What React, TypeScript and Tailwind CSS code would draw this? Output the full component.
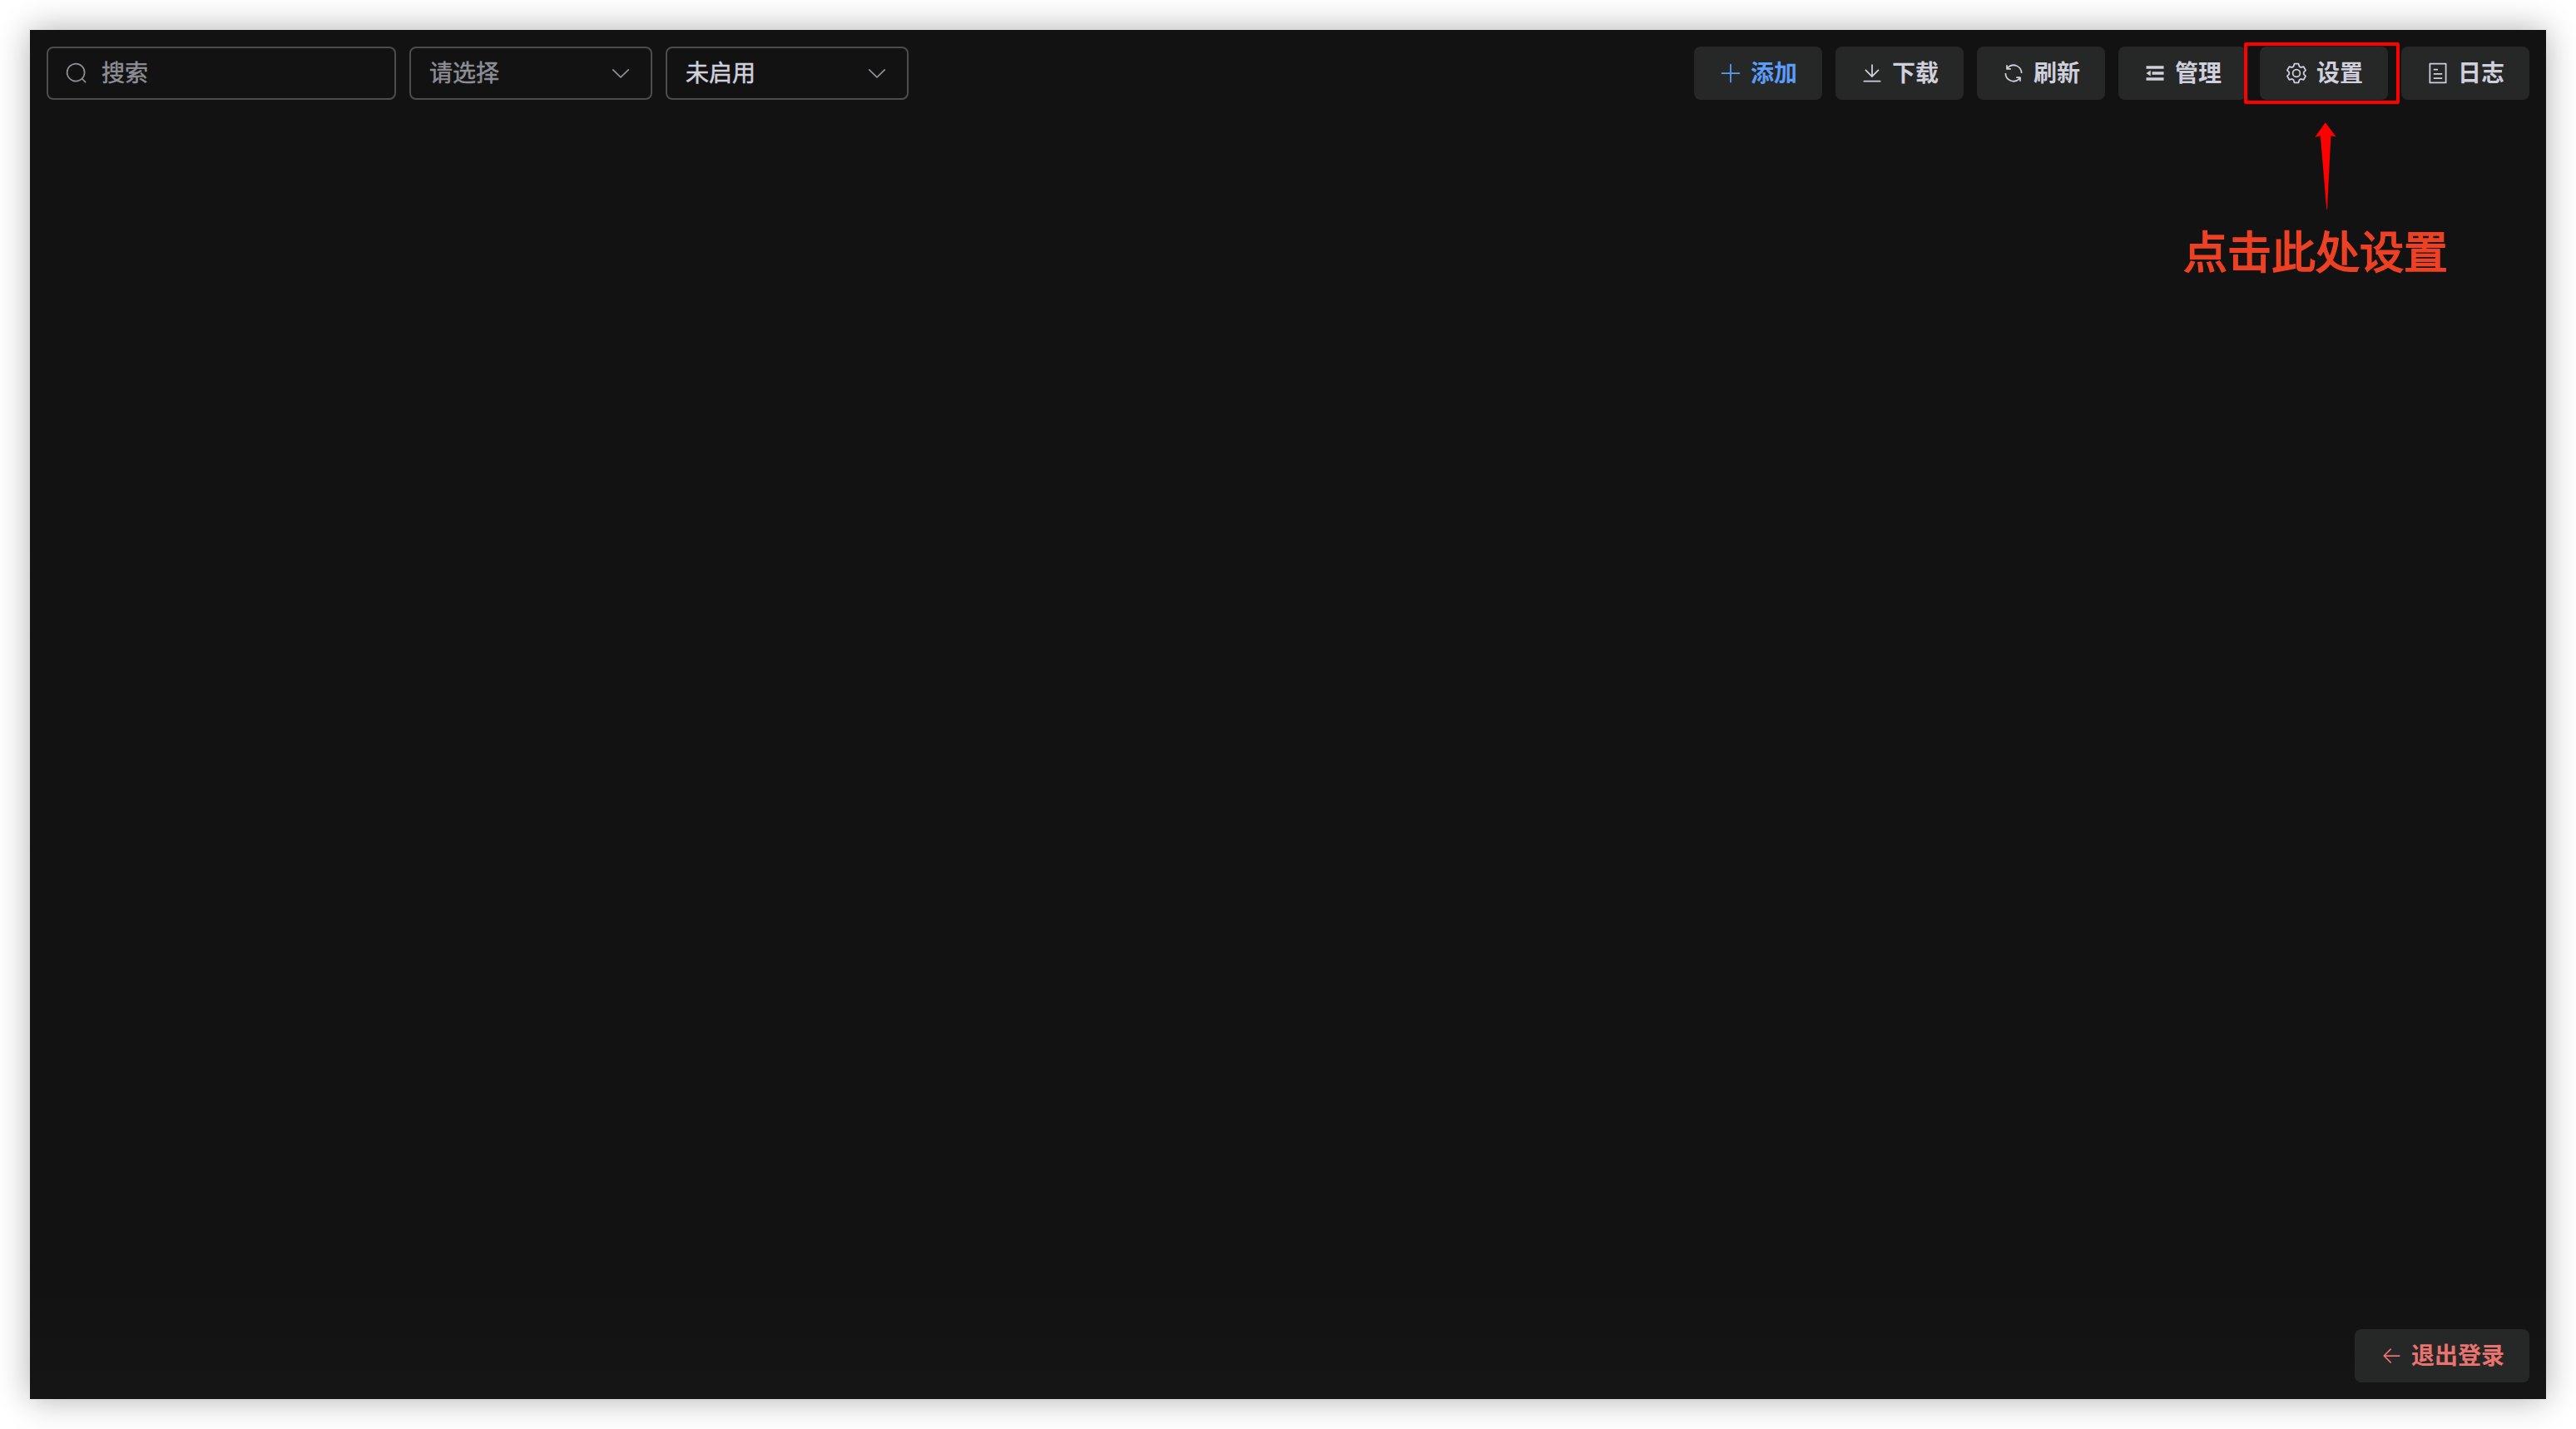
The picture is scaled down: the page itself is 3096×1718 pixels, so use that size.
import { useState } from 'react';

// Icon shapes, all on a 1024 grid
const icons = {
  search:
    'm795.904 750.72 124.992 124.928a32 32 0 0 1-45.248 45.248L750.656 795.904a416 416 0 1 1 45.248-45.248zM480 832a352 352 0 1 0 0-704 352 352 0 0 0 0 704',
  arrowDown:
    'M831.872 340.864 512 652.672 192.128 340.864a30.592 30.592 0 0 0-42.752 0 29.12 29.12 0 0 0 0 41.6L489.664 714.24a32 32 0 0 0 44.672 0l340.288-331.712a29.12 29.12 0 0 0 0-41.728 30.592 30.592 0 0 0-42.752 0z',
  plus: 'M480 480V128a32 32 0 0 1 64 0v352h352a32 32 0 1 1 0 64H544v352a32 32 0 1 1-64 0V544H128a32 32 0 0 1 0-64z',
  download:
    'M160 832h704a32 32 0 1 1 0 64H160a32 32 0 1 1 0-64m384-253.696 236.288-236.352 45.248 45.248L508.8 704 192 387.2l45.248-45.248L480 584.704V128h64z',
  refresh:
    'M771.776 794.88A384 384 0 0 1 128 512h64a320 320 0 0 0 555.712 216.448H654.72a32 32 0 1 1 0-64h149.056a32 32 0 0 1 32 32v148.928a32 32 0 1 1-64 0v-50.56zM276.288 295.616h92.992a32 32 0 0 1 0 64H220.16a32 32 0 0 1-32-32V178.56a32 32 0 0 1 64 0v50.56A384 384 0 0 1 896.128 512h-64a320 320 0 0 0-555.776-216.384z',
  fold: 'M896 192H128v128h768zm0 256H384v128h512zm0 256H128v128h768zM320 384 128 512l192 128z',
  setting:
    'M600.704 64a32 32 0 0 1 30.464 22.208l35.2 109.376c14.784 7.232 28.928 15.36 42.432 24.512l112.384-24.192a32 32 0 0 1 34.432 15.36L944.32 364.8a32 32 0 0 1-4.032 37.504l-77.12 85.12a357.12 357.12 0 0 1 0 49.024l77.12 85.248a32 32 0 0 1 4.032 37.504l-88.704 153.6a32 32 0 0 1-34.432 15.296L708.8 803.904c-13.44 9.088-27.648 17.28-42.368 24.512l-35.264 109.376A32 32 0 0 1 600.704 960H423.296a32 32 0 0 1-30.464-22.208L357.696 828.48a351.616 351.616 0 0 1-42.56-24.64l-112.32 24.256a32 32 0 0 1-34.432-15.36L79.68 659.2a32 32 0 0 1 4.032-37.504l77.12-85.248a357.12 357.12 0 0 1 0-48.896l-77.12-85.248A32 32 0 0 1 79.68 364.8l88.704-153.6a32 32 0 0 1 34.432-15.296l112.32 24.256c13.568-9.152 27.776-17.408 42.56-24.64l35.2-109.312A32 32 0 0 1 423.232 64H600.64zm-23.424 64H446.72l-36.352 113.088-24.512 11.968a294.113 294.113 0 0 0-34.816 20.096l-22.656 15.36-116.224-25.088-65.28 113.152 79.68 88.192-1.92 27.136a293.12 293.12 0 0 0 0 40.192l1.92 27.136-79.808 88.192 65.344 113.152 116.224-25.024 22.656 15.296a294.113 294.113 0 0 0 34.816 20.096l24.512 11.968L446.72 896h130.688l36.48-113.152 24.448-11.904a288.282 288.282 0 0 0 34.752-20.096l22.592-15.296 116.288 25.024 65.28-113.152-79.744-88.192 1.92-27.136a293.12 293.12 0 0 0 0-40.256l-1.92-27.136 79.808-88.128-65.344-113.152-116.288 24.96-22.592-15.232a287.616 287.616 0 0 0-34.752-20.096l-24.448-11.904L577.344 128zM512 320a192 192 0 1 1 0 384 192 192 0 0 1 0-384m0 64a128 128 0 1 0 0 256 128 128 0 0 0 0-256',
  tickets:
    'M192 128v768h640V128zm-32-64h704a32 32 0 0 1 32 32v832a32 32 0 0 1-32 32H160a32 32 0 0 1-32-32V96a32 32 0 0 1 32-32m160 448h384v64H320zm0-192h192v64H320zm0 384h384v64H320z',
  back: 'M224 480h640a32 32 0 1 1 0 64H224a32 32 0 0 1 0-64m13.248 32 265.408 265.344a32 32 0 0 1-45.312 45.312l-288-288a32 32 0 0 1 0-45.312l288-288a32 32 0 1 1 45.312 45.312z',
};

type IconName = keyof typeof icons;

function Icon({ name }: { name: IconName }) {
  return (
    <svg className="size-7 shrink-0" viewBox="0 0 1024 1024" fill="currentColor">
      <path d={icons[name]} />
    </svg>
  );
}

interface ActionButtonProps {
  icon: IconName;
  label: string;
  color?: string;
}

function ActionButton({ icon, label, color = 'text-[#cfd0dc]' }: ActionButtonProps) {
  return (
    <button
      className={`flex h-16 items-center gap-2.5 rounded-lg bg-[#262727] px-[30px] text-[28px] leading-none font-bold whitespace-nowrap ${color}`}
    >
      <Icon name={icon} />
      <span className="pb-[5px]">{label}</span>
    </button>
  );
}

function SelectBox({ label, color }: { label: string; color: string }) {
  return (
    <button className="flex h-16 w-[292px] items-center justify-between rounded-lg border-2 border-[#4c4d4f] px-[22px] text-[28px] leading-none [-webkit-text-stroke:0.5px]">
      <span className={`pb-[5px] ${color}`}>{label}</span>
      <span className="text-[#8d9095]">
        <Icon name="arrowDown" />
      </span>
    </button>
  );
}

export default function App() {
  const [keyword, setKeyword] = useState('');

  return (
    <div className="h-[1718px] w-[3096px] overflow-hidden bg-white p-9 font-['Noto_Sans_CJK_SC',sans-serif]">
      <div className="flex h-[1646px] flex-col justify-between bg-linear-to-b from-[#121212] from-92% to-[#151515] p-5 shadow-[0_0_38px_rgba(0,0,0,0.32)]">
        {/* Toolbar */}
        <div className="flex justify-between">
          <div className="flex gap-4">
            <label className="flex h-16 w-[420px] items-center gap-4 rounded-lg border-2 border-[#4c4d4f] px-5 text-[#8d8e95]">
              <Icon name="search" />
              <input
                className="min-w-0 flex-1 bg-transparent pb-[5px] text-[28px] outline-none [-webkit-text-stroke:0.5px] placeholder:text-[#8d8e95]"
                value={keyword}
                onChange={(e) => setKeyword(e.target.value)}
                placeholder="搜索"
              />
            </label>
            <SelectBox label="请选择" color="text-[#8d8e95]" />
            <SelectBox label="未启用" color="text-[#cfd0dc]" />
          </div>

          <div className="flex gap-4">
            <ActionButton icon="plus" label="添加" color="text-[#5a9cf8]" />
            <ActionButton icon="download" label="下载" />
            <ActionButton icon="refresh" label="刷新" />
            <ActionButton icon="fold" label="管理" />
            {/* Settings button with its callout */}
            <div className="relative">
              <ActionButton icon="setting" label="设置" />
              <div className="pointer-events-none absolute -top-[5px] -left-[19px] h-[74px] w-[187px] rounded-xs border-4 border-[#ff0000]" />
              <svg className="absolute top-[91px] left-[66px] h-[105px] w-[26px]" viewBox="0 0 26 105" fill="#ff0000">
                <path d="M12.8 0.3 25.6 17.5 19.4 16.2 15 104.5H14.2L6.8 16.2 0.2 18Z" />
              </svg>
              <p className="absolute top-[214px] -left-[92px] text-[53px] leading-[60px] whitespace-nowrap text-[#ee4023] [-webkit-text-stroke:1.8px]">
                点击此处设置
              </p>
            </div>
            <ActionButton icon="tickets" label="日志" />
          </div>
        </div>

        {/* Footer */}
        <div className="flex justify-end">
          <ActionButton icon="back" label="退出登录" color="text-[#e8736f]" />
        </div>
      </div>
    </div>
  );
}
